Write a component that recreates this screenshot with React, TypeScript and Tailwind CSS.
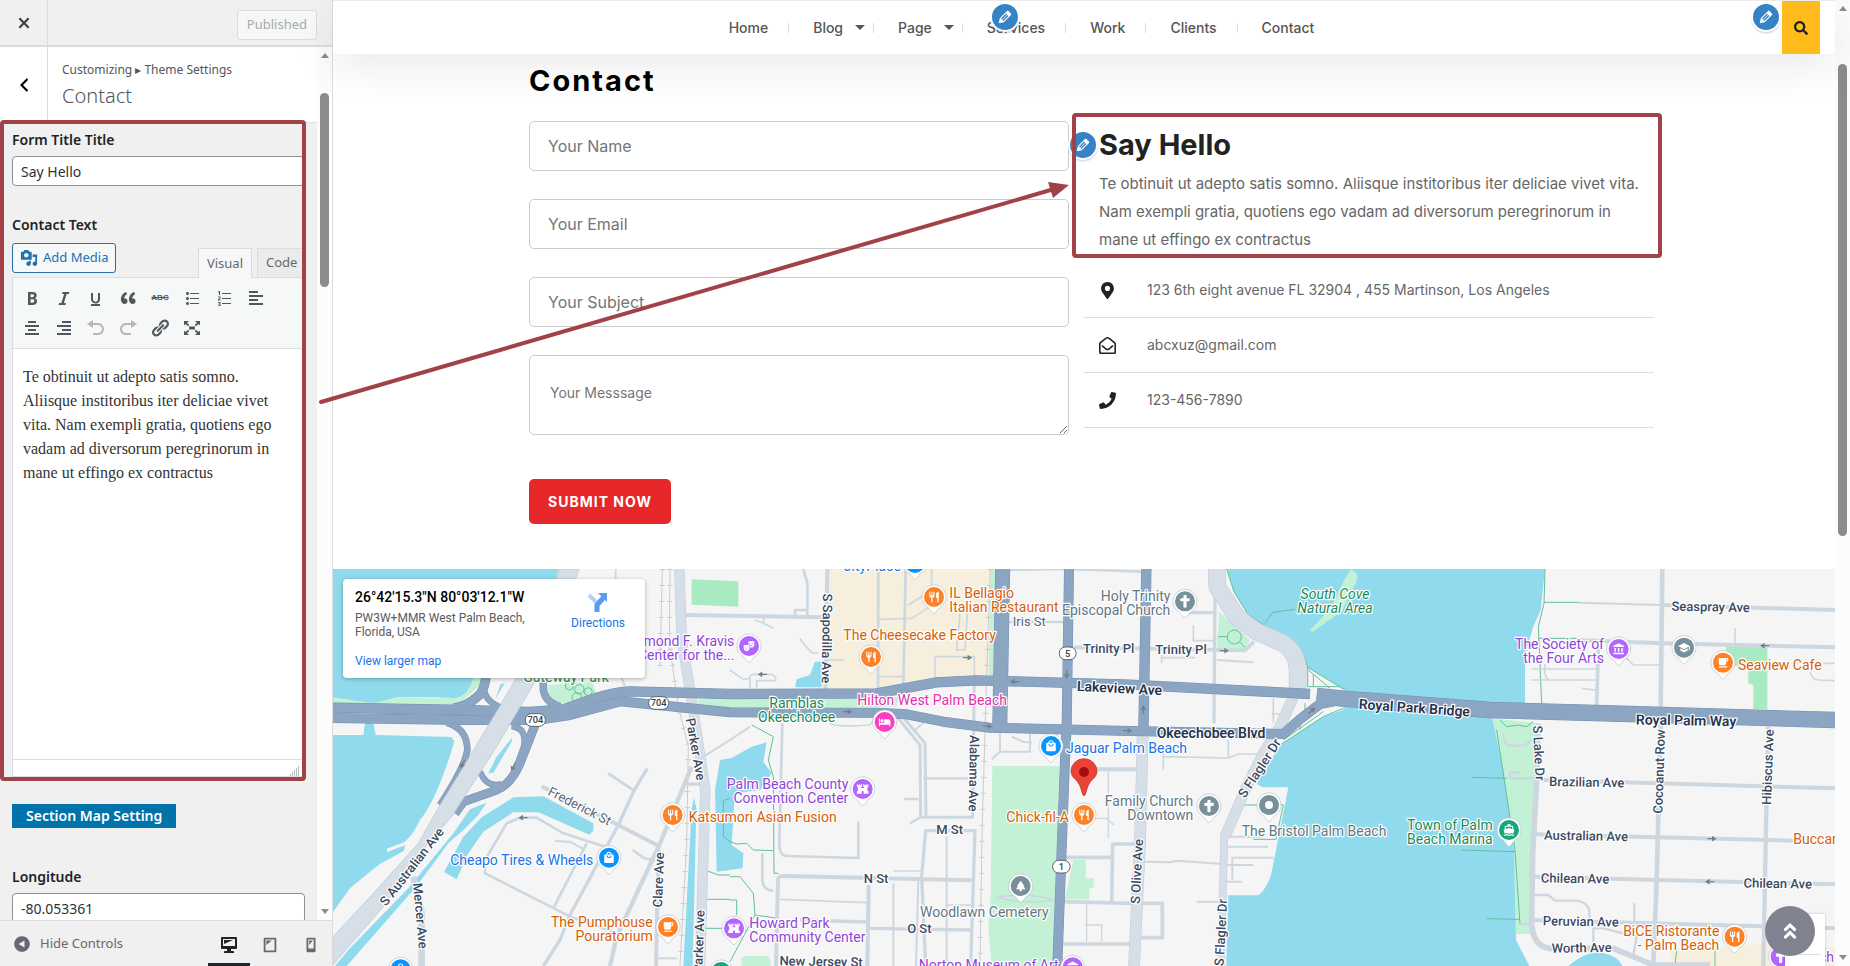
import type { ReactNode } from "react";
import {
  FaAngleDoubleUp,
  FaCross,
  FaMapMarkerAlt,
  FaPhone,
  FaRegEnvelopeOpen,
  FaSearch,
} from "react-icons/fa";
import {
  MdAccountBalance,
  MdDirectionsBoat,
  MdFort,
  MdHotel,
  MdLocalCafe,
  MdLocalMall,
  MdPark,
  MdRestaurant,
  MdSchool,
  MdTheaterComedy,
} from "react-icons/md";
import type { IconType } from "react-icons";

/* ---------- icons ---------- */

const glyphs = {
  close:
    "M14.95 6.46L11.41 10l3.54 3.54-1.41 1.41L10 11.42l-3.53 3.53-1.42-1.42L8.58 10 5.05 6.47l1.42-1.42L10 8.58l3.54-3.53z",
  back: "M14 5l-5 5 5 5-1 2-7-7 7-7z",
  media:
    "M13 11V4c0-.55-.45-1-1-1h-1.67L9 1H5L3.67 3H2c-.55 0-1 .45-1 1v7c0 .55.45 1 1 1h10c.55 0 1-.45 1-1zM7 4.5c1.38 0 2.5 1.12 2.5 2.5S8.38 9.5 7 9.5 4.5 8.38 4.5 7 5.62 4.5 7 4.5zM14 6h5v10.5c0 1.38-1.12 2.5-2.5 2.5S14 17.88 14 16.5s1.12-2.5 2.5-2.5c.17 0 .34.02.5.05V9h-3V6zm-4 8.05V13h2v3.5c0 1.38-1.12 2.5-2.5 2.5S7 17.88 7 16.5 8.12 14 9.5 14c.17 0 .34.02.5.05z",
  bold: "M6 4v13h4.54c1.37 0 2.46-.33 3.26-1 .8-.66 1.2-1.58 1.2-2.77 0-.84-.17-1.51-.51-2.01s-.9-.85-1.67-1.03v-.09c.57-.1 1.02-.4 1.36-.9s.51-1.13.51-1.91c0-1.14-.39-1.98-1.17-2.5C12.75 4.26 11.5 4 9.78 4H6zm2.57 5.15V6.26h1.36c.73 0 1.27.11 1.61.32.34.22.51.58.51 1.07 0 .54-.16.92-.47 1.15s-.82.35-1.51.35h-1.5zm0 2.19h1.6c1.44 0 2.16.53 2.16 1.61 0 .6-.17 1.05-.51 1.34s-.86.43-1.57.43H8.57v-3.38z",
  italic: "M14.78 6h-2.13l-2.8 9h2.12l-.62 2H4.6l.62-2h2.14l2.8-9H8.03l.62-2h6.75z",
  underline:
    "M14 5h-2v5.71c0 1.99-1.12 2.98-2.45 2.98-1.32 0-2.55-1-2.55-2.96V5H5v5.87c0 1.91 1 4.54 4.48 4.54 3.49 0 4.52-2.58 4.52-4.5V5zm0 13v-2H5v2h9z",
  quote:
    "M9.49 13.22c0-.74-.2-1.38-.61-1.9-.62-.78-1.83-.88-2.53-.72-.29-1.65 1.11-3.75 2.92-4.65L7.88 4c-2.73 1.3-5.42 4.28-4.96 8.05C3.21 14.43 4.59 16 6.54 16c.85 0 1.56-.25 2.12-.75s.83-1.18.83-2.03zm8.05 0c0-.74-.2-1.38-.61-1.9-.63-.78-1.83-.88-2.53-.72-.29-1.65 1.11-3.75 2.92-4.65L15.93 4c-2.73 1.3-5.41 4.28-4.95 8.05.29 2.38 1.66 3.95 3.61 3.95.85 0 1.56-.25 2.12-.75s.83-1.18.83-2.03z",
  bullets:
    "M5.5 7C4.67 7 4 6.33 4 5.5 4 4.68 4.67 4 5.5 4 6.32 4 7 4.68 7 5.5 7 6.33 6.32 7 5.5 7zM8 5h9v1H8V5zm-2.5 7c-.83 0-1.5-.67-1.5-1.5C4 9.68 4.67 9 5.5 9c.82 0 1.5.68 1.5 1.5 0 .83-.68 1.5-1.5 1.5zM8 10h9v1H8v-1zm-2.5 7c-.83 0-1.5-.67-1.5-1.5 0-.82.67-1.5 1.5-1.5.82 0 1.5.68 1.5 1.5 0 .83-.68 1.5-1.5 1.5zM8 15h9v1H8v-1z",
  numbers:
    "M8 5h9v1H8zM8 10h9v1H8zM8 15h9v1H8zM5 3h1v4H5V4.4l-.8.3V3.8zM4 8.5h2.5v2L5 11.6h1.5v.9H4v-1.2l1.6-1.2v-.8H4zM4 14h2.5v4H4v-.8h1.6v-.8H4.5v-.8h1.1v-.8H4z",
  left: "M12 5V3H3v2h9zm5 4V7H3v2h14zm-5 4v-2H3v2h9zm5 4v-2H3v2h14z",
  center: "M14 5V3H6v2h8zm3 4V7H3v2h14zm-3 4v-2H6v2h8zm3 4v-2H3v2h14z",
  right: "M17 5V3H8v2h9zm0 4V7H3v2h14zm0 4v-2H8v2h9zm0 4v-2H3v2h14z",
  undo: "M12 5H7V2L1 6l6 4V7h5c2.2 0 4 1.8 4 4s-1.8 4-4 4H7v2h5c3.3 0 6-2.7 6-6s-2.7-6-6-6z",
  redo: "M8 5h5V2l6 4-6 4V7H8c-2.2 0-4 1.8-4 4s1.8 4 4 4h5v2H8c-3.3 0-6-2.7-6-6s2.7-6 6-6z",
  link: "M17.74 2.76c1.68 1.69 1.68 4.41 0 6.1l-1.53 1.52c-1.12 1.12-2.7 1.47-4.14 1.09l2.62-2.61.76-.77.76-.76c.84-.84.84-2.2 0-3.04-.84-.85-2.2-.85-3.04 0l-.77.76-3.38 3.38c-.37-1.44-.02-3.02 1.1-4.14l1.52-1.53c1.69-1.68 4.42-1.68 6.1 0zM8.59 13.43l5.34-5.34c.42-.42.42-1.1 0-1.52-.44-.43-1.13-.39-1.53 0l-5.33 5.34c-.42.42-.42 1.1 0 1.52.44.43 1.13.39 1.52 0zm-.76 2.29l4.14-4.15c.38 1.44.03 3.02-1.09 4.14l-1.52 1.53c-1.69 1.68-4.41 1.68-6.1 0-1.68-1.68-1.68-4.42 0-6.1l1.53-1.52c1.12-1.12 2.7-1.47 4.14-1.1l-4.14 4.15c-.85.84-.85 2.2 0 3.05.84.84 2.2.84 3.04 0z",
  fullscreen:
    "M7 3H2v4.500l1.500-1.500L6 8.200 7.200 7 5 4.800zM13 3l2 1.800L12.800 7 14 8.200l2.500-2.200L18 7.500V3zM14 11.800L12.800 13l2.200 2.200-2 1.800h5v-4.500L16.500 14zM6 11.800L3.500 14 2 12.500V17h5l-2-1.800L7.200 13zM7 8.500h6v3H7z",
  edit: "M13.89 3.39l2.71 2.72c.46.46.42 1.24.03 1.64l-8.01 8.02-5.56 1.16 1.16-5.58s7.6-7.63 7.99-8.03c.39-.39 1.22-.39 1.68.07zm-2.73 2.79l-5.59 5.61 1.11 1.11 5.54-5.65zm-2.97 8.23l5.58-5.6-1.07-1.08-5.59 5.6z",
  desktop:
    "M3 2h14c.55 0 1 .45 1 1v10c0 .55-.45 1-1 1h-5v2h2c.55 0 1 .45 1 1v1H5v-1c0-.55.45-1 1-1h2v-2H3c-.55 0-1-.45-1-1V3c0-.55.45-1 1-1zm13 9V4H4v7h12zM5 5h9L5 9V5z",
  tablet:
    "M4 2h12c.55 0 1 .45 1 1v14c0 .55-.45 1-1 1H4c-.55 0-1-.45-1-1V3c0-.55.45-1 1-1zm11 14V4H5v12h10zM6 5h6l-6 5V5z",
  phone:
    "M6 2h8c.55 0 1 .45 1 1v14c0 .55-.45 1-1 1H6c-.55 0-1-.45-1-1V3c0-.55.45-1 1-1zm7 12V4H7v10h6zM8 5h4l-4 5V5z",
  collapse:
    "M10 2.200c4.300 0 7.800 3.500 7.800 7.800s-3.500 7.800-7.800 7.800S2.200 14.300 2.200 10 5.700 2.200 10 2.200zM12.500 13.500v-7L6.500 10z",
};

type GlyphName = keyof typeof glyphs;

function Glyph({ name, className = "size-5" }: { name: GlyphName; className?: string }) {
  return (
    <svg viewBox="0 0 20 20" className={className} fill="currentColor" fillRule="evenodd" aria-hidden="true">
      <path d={glyphs[name]} />
    </svg>
  );
}

function EditShortcut({ label, className }: { label: string; className: string }) {
  return (
    <button
      type="button"
      aria-label={label}
      className={`absolute flex size-[30px] items-center justify-center rounded-full border-2 border-white bg-[#3582c4] text-white shadow-[0_2px_1px_rgba(46,68,83,0.15)] ${className}`}
    >
      <Glyph name="edit" className="size-[18px]" />
    </button>
  );
}

/* ---------- customizer sidebar ---------- */

type Tool = GlyphName | "strike";

const toolRows: Tool[][] = [
  ["bold", "italic", "underline", "quote", "strike", "bullets", "numbers", "left"],
  ["center", "right", "undo", "redo", "link", "fullscreen"],
];

function Toolbar() {
  return (
    <div className="flex flex-col gap-[2px] border border-[#dcdcde] bg-[#f6f7f7] px-[5px] py-[6px] shadow-[0_1px_1px_rgba(0,0,0,0.1)]">
      {toolRows.map((row, i) => (
        <div key={i} className="flex gap-1">
          {row.map((tool) => (
            <button
              key={tool}
              type="button"
              aria-label={tool}
              className={`flex size-7 items-center justify-center ${
                tool === "undo" || tool === "redo" ? "text-[#b5b7ba]" : "text-[#50575e]"
              }`}
            >
              {tool === "strike" ? (
                <span className="font-['Liberation_Sans'] text-[8px] font-bold line-through">ABC</span>
              ) : (
                <Glyph name={tool} />
              )}
            </button>
          ))}
        </div>
      ))}
    </div>
  );
}

const editorText =
  "Te obtinuit ut adepto satis somno. Aliisque institoribus iter deliciae vivet vita. Nam exempli gratia, quotiens ego vadam ad diversorum peregrinorum in mane ut effingo ex contractus";

function Scrollbar({ className, children }: { className: string; children: ReactNode }) {
  return (
    <div className={`flex w-[15px] shrink-0 flex-col items-center justify-between bg-[#fcfcfc] ${className}`}>
      <span className="border-x-4 border-b-[5px] border-x-transparent border-b-[#8b8b8b]" />
      {children}
      <span className="border-x-4 border-t-[5px] border-x-transparent border-t-[#8b8b8b]" />
    </div>
  );
}

function Sidebar() {
  return (
    <aside className="flex w-[333px] shrink-0 flex-col border-r border-[#dcdcde] bg-[#f0f0f0] font-['Noto_Sans',sans-serif] text-[13px] text-[#3c434a]">
      <header className="flex h-[47px] shrink-0 border-b-2 border-[#dcdcde]">
        <button
          type="button"
          aria-label="Close"
          className="flex w-12 items-center justify-center border-r border-[#dcdcde] text-[#3c434a]"
        >
          <Glyph name="close" className="size-[22px]" />
        </button>
        <div className="flex flex-1 items-center justify-end pt-1 pr-[15px]">
          <button
            type="button"
            disabled
            className="h-[30px] rounded-[3px] border border-[#dcdcde] bg-[#f6f7f7] px-[9px] text-[#a7aaad]"
          >
            Published
          </button>
        </div>
      </header>

      <div className="flex min-h-0 flex-1">
        <div className="flex min-w-0 flex-1 flex-col overflow-hidden">
          <div className="flex h-[76px] shrink-0 border-b border-[#dcdcde] bg-white">
            <button
              type="button"
              aria-label="Back"
              className="flex w-12 items-center justify-center border-r border-[#dcdcde] text-black"
            >
              <Glyph name="back" />
            </button>
            <div className="flex flex-col justify-center gap-[2px] px-[14px] text-[#50575e]">
              <span className="text-xs leading-5">Customizing ▸ Theme Settings</span>
              <h2 className="text-xl leading-7 font-light">Contact</h2>
            </div>
          </div>

          <section className="relative flex h-[658px] shrink-0 flex-col px-3 pt-[5px]">
            <label htmlFor="form-title" className="text-sm leading-6 font-semibold text-[#1d2327]">
              Form Title Title
            </label>
            <input
              id="form-title"
              defaultValue="Say Hello"
              className="mt-1 h-[30px] w-full rounded border border-[#8c8f94] bg-white px-2 text-sm text-[#2c3338]"
            />
            <label htmlFor="contact-text" className="mt-[27px] text-sm leading-6 font-semibold text-[#1d2327]">
              Contact Text
            </label>
            <div className="mt-[6px] flex h-[34px] items-start">
              <button
                type="button"
                className="flex h-[30px] items-center gap-[5px] rounded-[3px] border border-[#2271b1] bg-[#f6f7f7] px-[7px] text-[#2271b1]"
              >
                <Glyph name="media" className="size-[18px]" />
                Add Media
              </button>
              <div className="ml-auto flex gap-[5px] self-end text-[#646970]">
                <button
                  type="button"
                  className="relative z-10 -mb-px h-[30px] border border-b-0 border-[#dcdcde] bg-[#f6f7f7] px-2"
                >
                  Visual
                </button>
                <button type="button" className="h-[29px] w-12 border border-b-0 border-[#dcdcde] bg-[#ebebeb] px-2 text-left">
                  Code
                </button>
              </div>
            </div>
            <Toolbar />
            <textarea
              id="contact-text"
              defaultValue={editorText}
              className="block w-full flex-1 resize-none border-x border-[#dcdcde] bg-white px-[10px] py-4 font-['Liberation_Serif',serif] text-base leading-6 text-[#333]"
            />
            <div className="mb-1 flex h-[18px] items-end justify-end border border-[#dcdcde] bg-white pr-1">
              <svg viewBox="0 0 12 12" className="size-3 text-[#787c82]" aria-hidden="true">
                <path d="M2 11h10M4 9h8M6 7h6M8 5h4M10 3h2" stroke="currentColor" strokeDasharray="1 1" />
              </svg>
            </div>
            <div className="pointer-events-none absolute inset-y-0 -top-[3px] left-0 w-[306px] rounded-sm border-4 border-[#a04248]" />
          </section>

          <div className="flex flex-col items-start px-3 pt-[23px]">
            <h3 className="bg-[#0073aa] px-[14px] text-sm leading-6 font-semibold text-white">Section Map Setting</h3>
            <label htmlFor="longitude" className="mt-[37px] text-sm leading-6 font-semibold text-[#1d2327]">
              Longitude
            </label>
            <input
              id="longitude"
              defaultValue="-80.053361"
              className="mt-1 h-[30px] w-full rounded border border-[#8c8f94] bg-white px-2 text-sm text-[#2c3338]"
            />
          </div>
        </div>
        <Scrollbar className="py-[6px]">
          <span className="mt-[35px] mb-auto h-[194px] w-[9px] rounded-full bg-[#8b8b8b]" />
        </Scrollbar>
      </div>

      <footer className="flex h-[46px] shrink-0 items-stretch border-t border-[#dcdcde] pl-3">
        <button type="button" className="flex items-center gap-2 text-[#646970]">
          <Glyph name="collapse" />
          Hide Controls
        </button>
        <div className="ml-auto flex text-[#646970]">
          <button type="button" aria-label="Desktop preview" className="w-[42px] border-b-[3px] border-[#1d2327] pt-[5px] text-[#1d2327]">
            <Glyph name="desktop" className="mx-auto size-5" />
          </button>
          <button type="button" aria-label="Tablet preview" className="w-10 pt-[3px]">
            <Glyph name="tablet" className="mx-auto size-[18px]" />
          </button>
          <button type="button" aria-label="Mobile preview" className="w-[42px] pt-[3px]">
            <Glyph name="phone" className="mx-auto size-[18px]" />
          </button>
        </div>
      </footer>
    </aside>
  );
}

/* ---------- site preview ---------- */

const navItems = [
  { name: "Home" },
  { name: "Blog", menu: true },
  { name: "Page", menu: true },
  { name: "Services" },
  { name: "Work" },
  { name: "Clients" },
  { name: "Contact" },
];

function SiteNav() {
  return (
    <header className="relative z-10 flex h-[54px] shrink-0 border-t border-[#ebebeb] bg-white shadow-[0_15px_40px_rgba(0,0,0,0.08)]">
      <nav className="flex flex-1 items-center justify-center pr-[52px]">
        {navItems.map((item, i) => (
          <div key={item.name} className="flex items-center">
            {i > 0 && <span className="mr-6 h-[10px] w-px bg-[#ddd]" />}
            <a
              href="#"
              className={`flex items-center gap-3 text-sm font-medium text-[#555] ${item.menu ? "mr-2" : "mr-5"}`}
            >
              {item.name}
              {item.menu && <span className="border-x-[5px] border-t-[5px] border-x-transparent border-t-[#555]" />}
            </a>
          </div>
        ))}
      </nav>
      <button type="button" aria-label="Search" className="mr-[15px] flex w-[38px] items-center justify-center bg-[#ffba1b] text-[#222]">
        <FaSearch className="size-[14px]" />
      </button>
      <EditShortcut label="Edit menu" className="top-px left-[657px]" />
      <EditShortcut label="Edit search" className="top-px right-[54px]" />
    </header>
  );
}

const fields = ["Your Name", "Your Email", "Your Subject"];

const details = [
  { icon: FaMapMarkerAlt, text: "123 6th eight avenue FL 32904 , 455 Martinson, Los Angeles" },
  { icon: FaRegEnvelopeOpen, text: "abcxuz@gmail.com" },
  { icon: FaPhone, text: "123-456-7890" },
];

function ContactSection() {
  return (
    <section className="mx-auto grid h-[515px] w-full max-w-[1140px] shrink-0 grid-cols-2">
      <form className="flex flex-col items-start px-[15px] pt-2">
        <h1 className="text-[29px] leading-[38px] font-bold tracking-[2px] text-black">Contact</h1>
        <div className="mt-[21px] flex w-full flex-col gap-7">
          {fields.map((field) => (
            <input
              key={field}
              aria-label={field}
              placeholder={field}
              className="h-[50px] w-full rounded-[5px] border border-[#ccc] px-[18px] text-base placeholder:text-[#757575]"
            />
          ))}
          <textarea
            aria-label="Your Messsage"
            placeholder="Your Messsage"
            className="h-20 w-full rounded-[5px] border border-[#ccc] px-5 py-[27px] text-sm placeholder:text-[#757575]"
          />
        </div>
        <button
          type="submit"
          className="mt-11 h-[45px] rounded-[5px] bg-[#e72729] px-[19px] text-sm font-bold tracking-[1px] text-white"
        >
          SUBMIT NOW
        </button>
      </form>

      <div className="pt-[71px]">
        <div className="relative px-[15px] pb-[9px] text-[#666]">
          <h2 className="text-[29px] leading-10 font-bold text-[#222]">Say Hello</h2>
          <p className="mt-[5px] w-[540px] text-[15px] leading-7">
            Te obtinuit ut adepto satis somno. Aliisque institoribus iter deliciae vivet vita. Nam exempli gratia,
            quotiens ego vadam ad diversorum peregrinorum in mane ut effingo ex contractus
          </p>
          <EditShortcut label="Edit contact text" className="top-[5px] -left-4" />
          <div className="pointer-events-none absolute -top-3 -right-2 bottom-[5px] -left-3 rounded-sm border-4 border-[#a04248]" />
        </div>
        <ul>
          {details.map(({ icon: Icon, text }) => (
            <li key={text} className="flex h-[55px] items-center border-b border-[#ddd] px-[15px] text-sm text-[#666]">
              <span className="w-12 text-[#222]">
                <Icon className="size-[17px]" />
              </span>
              {text}
            </li>
          ))}
        </ul>
      </div>
    </section>
  );
}

/* ---------- map ---------- */

const water = [
  "M9 27H685L640 200 430 353Q410 425 350 412L250 412 200 412 130 430 9 412Z",
  "M9 525L100 525 105 488H130L137 525 365 531 373 545Q320 720 270 780 240 840 215 850L170 866 172 876 226 855 222 872 150 912 120 935 60 985 9 1056Z",
  "M470 728L420 748 370 820 300 905 235 985 60 1165 15 1218H50L250 990 300 925 355 850 400 810 445 765Z",
  "M342 936L400 830 455 772 550 712 640 709 790 790V812L778 824 625 757 550 757 460 815 415 880 380 958Z",
  "M475 640L500 590 546 533 545 545 490 638Z",
  "M496 418L512 372 524 370Z",
  "M1085 745L1092 712 1099 745 1088 1218H1060Z",
  "M1155 690L1170 600 1205 594 1265 560 1310 547 1300 605 1325 640 1290 690 1215 700 1205 855 1240 880 1238 925 1160 935Z",
  "M1395 382L1400 358 1440 345 1455 305 1475 305 1475 382Z",
  "M2690 27L2712 95 2752 160 2810 202 2885 243 2922 290 2933 322 3045 390 3040 450 2980 470 2855 552 2795 640 2780 672 2797 682H2875L2838 870 2822 950Q2800 1000 2783 1006H2695L2689 1218H3598L3558 1140 3552 870 3522 640 3487 475 3585 475V290L3608 205 3632 150 3645 27Z",
  "M3715 1218Q3760 1178 3800 1178 3860 1180 3877 1218Z",
];

const parks = [
  "M640 27H705L640 200 460 360Q430 400 380 434H9V400L120 428 160 412 320 415Q390 400 410 353Z",
  "M655 375L785 365 800 400 690 432 655 438Z",
  "M1105 418L1705 412 1700 440 1200 445 1105 440Z",
  "M1982 27H1996L1990 350H1976Z",
  "M1987 618H2188L2170 1218H1985L1975 1100 1982 1010Z",
  "M2230 900H2267V955H2292L2290 985H2278V1018H2205Z",
  "M2668 155L2760 240 2745 268H2660Z",
  "M3487 475L3625 490 3605 800 3600 1122H3557L3552 870 3522 640Z",
  "M1235 1218V1197Q1237 1187 1250 1187H1310Q1322 1190 1322 1218Z",
];

const cove = "M3062 28Q3090 40 3080 62L3035 155 2990 185 2947 217 2940 210 2965 185 3010 130 3040 65Z";

const lawns = ["M1085 58L1225 64V140L1085 134Z", "M4188 260H4312V448H4270V375L4255 370V318H4188Z"];

const districts = [
  "M1485 27H1982L1976 345 1840 362 1650 388H1478Z",
  "M4020 1172L4160 1162 4315 1150 4515 1162V1218H4020Z",
];

// [path, stroke width]
const streets: [string, number][] = [
  ["M835 640L912 692", 8],
  ["M952 625L912 692 865 795 720 1065 690 1140 640 1218", 10],
  ["M635 680L700 710 985 857 985 900 978 1218", 12],
  ["M1085 620L990 850 860 1130 840 1218", 13],
  ["M570 773L530 790 465 900V940L720 1070 850 1115", 8],
  ["M570 773H620L700 820 830 862", 8],
  ["M675 843L720 845 765 870", 6],
  ["M770 850L670 1045", 8],
  ["M908 870L940 893 975 903", 8],
  ["M1120 590L1200 540 1260 500", 6],
  ["M250 950L275 1060V1218", 20],
  ["M1060 165L1480 172", 12],
  ["M857 27V60", 5],
  ["M1070 672H1120", 10],
  ["M875 353L885 380", 6],
  ["M985 1195H1040", 6],
  ["M1492 27L1486 410", 12],
  ["M1420 27L1432 70V165M1395 165V150H1432", 8],
  ["M1645 27L1644 385M1727 27L1720 385", 8],
  ["M1805 27V90L1735 135M1645 178L1745 175 1800 140M1815 360V290H1933V350M1890 160L1880 270H1905L1912 160M1645 350H1720", 5],
  ["M1260 385V350Q1262 343 1270 343H1325Q1342 350 1335 362H1280V385M1200 330L1240 358 1262 355M1410 235L1420 250 1445 278 1465 280M1275 180L1300 190 1330 205M1300 190L1302 172M1485 300H1540", 5],
  ["M1933 350L1928 772H1770", 9],
  ["M1705 475L1770 555 1772 770M1722 475L1785 550 1788 770", 9],
  ["M1500 490Q1510 502 1620 495L1645 460M1755 510L1790 480", 5],
  ["M1357 490L1348 850Q1348 888 1370 888L1585 894V785", 8],
  ["M1780 655H1915M1722 717H1765M1740 790L1775 770", 7],
  ["M1787 1218L1775 950 1787 812H1935L1922 1218", 10],
  ["M1765 960L1758 1218M1850 830V1218M1690 970V1218", 6],
  ["M1338 1218L1344 960Q1345 948 1360 948L1925 961", 12],
  ["M1690 933H1775M1348 1018L1615 1028M1850 1035H1925", 5],
  ["M1410 1080L1615 1086M1620 1105L1925 1110", 10],
  ["M1616 975L1612 1218", 12],
  ["M1297 880V960Q1300 992 1330 992", 8],
  ["M2035 186H2205M2010 30L2217 27M2217 27L2435 35", 8],
  ["M2230 262L2745 271 2772 245", 11],
  ["M2010 520V575H2100V520M1985 598L2010 575M2045 530L2080 545 2105 548", 6],
  ["M2225 628H2425", 12],
  ["M2205 892H2345M2345 1025L2348 852H2425M2200 1025L2410 1030M2200 1152H2410", 11],
  ["M2270 1030V1145M2265 1095H2315V1145M2335 630V835M2290 775H2330L2352 795", 4],
  ["M2000 1012Q2090 995 2172 1020 2090 1035 2000 1012Z", 5],
  ["M2655 90L2652 490M2560 158H2660", 10],
  ["M2590 195V242H2655M2495 285V310M2497 293H2595M2830 415V490M2825 462H2860M2500 580V630M2500 590L2695 594 2725 582H2800M2695 540V592", 5],
  ["M2660 300L2770 307M2675 830H2800M2690 860H2815M2707 960V893H2830M2670 915H2770M2690 965H2735M2440 905L2520 907 2545 902 2680 912M2600 1025H2670", 6],
  ["M2430 1030H2497V1133H2430", 11],
  ["M3997 27L3992 440M3992 490L3980 960 3970 1218", 14],
  ["M3745 128L3995 135", 6],
  ["M3995 135L4515 150M3740 240L3995 250 4515 262M3640 660L4515 685M3610 823L4390 842M3605 950L4515 973M3600 1080L4515 1105", 12],
  ["M4215 205V250M3865 270L3910 315H3990M3605 327H3800M3602 360H3795M3755 385L3795 390M3645 312Q3640 350 3655 358M4480 310H4515M4440 335Q4445 358 4465 360L4515 362", 5],
  ["M3805 265L3800 435", 11],
  ["M3625 490L3620 660 3608 880 3605 1080Q3605 1160 3660 1165L3850 1165 3910 1190 3970 1215H4140", 17],
  ["M4315 500L4308 800 4300 1218", 13],
  ["M3610 1005H3655L3675 1022H3740Q3778 1030 3778 1055V1085M3790 1160V1105H3820L3920 1130 3910 1185M3913 1030V1085M3520 520Q3522 557 3540 557H3585L3605 540M3570 638H3540V655H3615M3570 1092H3605", 7],
];

const avenues: [string, number][] = [
  ["M1048 27L1055 240 1085 420 1126 690 1110 1218", 28],
  ["M2660 27L2662 80 2720 170 2780 215 2860 250Q2903 280 2903 330V400", 50],
  ["M2895 400L2850 500 2800 580 2750 680 2685 830", 30],
  ["M2683 820L2678 1020 2674 1218", 20],
  ["M2438 530L2430 850 2412 1218", 32],
];

const highways: [string, number][] = [
  ["M350 488Q412 505 412 570 405 620 330 735", 17],
  ["M468 353Q460 400 440 412 410 440 370 445", 26],
  ["M460 370Q458 425 520 445", 16],
  ["M640 365V385Q642 425 690 440", 20],
  ["M545 498Q592 505 582 560 L560 620", 16],
  ["M615 495L570 610Q545 670 500 690L400 725 375 760", 24],
  ["M450 635Q470 685 515 672", 15],
  ["M9 443L400 450 600 456 700 448 780 420Q850 395 900 394L1200 402 1640 400 1820 367 1940 361 2400 374 2940 402", 28],
  ["M9 474L400 480 620 480 720 465 870 424 1200 457 1640 458 1730 463 1840 485 1980 503 2400 513 2860 522 2910 478 2970 432 3040 418", 27],
  ["M2018 27L2009 515", 42],
  ["M2217 27L2210 500 2205 600 2190 1000 2182 1218", 27],
  ["M2449 27L2440 520", 28],
  ["M2960 408L3040 416 3480 450 3900 462 4515 480", 46],
];

const trails =
  "M3645 27L3642 130 3625 200 3635 430M3642 127H3750M3625 235H3740M3500 510L3555 870 3570 1092M3425 652L3530 655M3395 870L3555 875M3470 1076L3570 1078M3510 480L3530 500 3565 495 3590 500 3610 485M2805 190L2828 157 2895 148M2735 735H2785M2840 730L2860 735 2838 838H2770M1265 495L1330 530 1315 600 1330 650 1332 940H1345M1200 845L1220 852 1250 850 1270 870 1330 872M1200 950H1230L1270 1000 1275 1065 1200 1205M1200 1020H1220V1065M1275 1065L1345 1075M1125 930L1165 945H1200M1120 1018H1200M1120 1105H1185M1200 715L1180 722V830L1200 845M2690 27L2712 95 2752 160 2810 202 2885 243 2922 290 2933 322 3045 390M2933 320V380H3030M2950 345V380M2935 330L3000 385M2925 430V450M2855 552L2980 470 3040 445M2910 490V510M2860 540L2980 455M2663 230H2690M2728 245L2745 262M4035 1218L4040 1170M4155 1170V1218";

const rails =
  "M997 27L990 320M1020 27L1018 250 1045 440 1075 560 1070 850 1050 1218M1981 27L1970 350 1956 820 1950 1218";

type LabelProps = {
  x: number;
  y: number;
  lines: string[];
  color: string;
  anchor?: "start" | "middle" | "end";
  rotate?: number;
  size?: number;
  weight?: number;
  italic?: boolean;
};

const ink = "#3b4a63";
const food = "#d5600a";
const shop = "#1a73e8";
const arts = "#8f45d8";
const civic = "#5f7885";
const nature = "#188a5b";

const placeLabels: LabelProps[] = [
  { x: 1213, y: 258, lines: ["Raymond F. Kravis", "Center for the..."], color: arts, anchor: "end" },
  { x: 708, y: 367, lines: ["Gateway Park"], color: nature, anchor: "middle" },
  { x: 1400, y: 445, lines: ["Ramblas", "Okeechobee"], color: nature, anchor: "middle" },
  { x: 3015, y: 118, lines: ["South Cove", "Natural Area"], color: nature, anchor: "middle", italic: true },
  { x: 3488, y: 811, lines: ["Town of Palm", "Beach Marina"], color: nature, anchor: "end" },
  { x: 1076, y: 787, lines: ["Katsumori Asian Fusion"], color: food },
  { x: 968, y: 1102, lines: ["The Pumphouse", "Pouratorium"], color: food, anchor: "end" },
  { x: 1858, y: 113, lines: ["IL Bellagio", "Italian Restaurant"], color: food },
  { x: 1540, y: 241, lines: ["The Cheesecake Factory"], color: food },
  { x: 2217, y: 787, lines: ["Chick-fil-A"], color: food, anchor: "end" },
  { x: 4224, y: 331, lines: ["Seaview Cafe"], color: food },
  { x: 4390, y: 853, lines: ["Buccan"], color: food },
  { x: 4168, y: 1129, lines: ["BiCE Ristorante", "- Palm Beach"], color: food, anchor: "end" },
  { x: 790, y: 915, lines: ["Cheapo Tires & Wheels"], color: shop, anchor: "end" },
  { x: 2208, y: 580, lines: ["Jaguar Palm Beach"], color: shop },
  { x: 1625, y: 33, lines: ["CityPlace"], color: shop, anchor: "middle" },
  { x: 1555, y: 688, lines: ["Palm Beach County", "Convention Center"], color: arts, anchor: "end" },
  { x: 1258, y: 1104, lines: ["Howard Park", "Community Center"], color: arts },
  { x: 3822, y: 268, lines: ["The Society of", "the Four Arts"], color: arts, anchor: "end" },
  { x: 2186, y: 1230, lines: ["Norton Museum of Art"], color: arts, anchor: "end" },
  { x: 4512, y: 1205, lines: ["Church"], color: arts, anchor: "end" },
  { x: 2521, y: 124, lines: ["Holy Trinity", "Episcopal Church"], color: civic, anchor: "end" },
  { x: 2590, y: 739, lines: ["Family Church", "Downtown"], color: civic, anchor: "end" },
  { x: 2735, y: 829, lines: ["The Bristol Palm Beach"], color: civic },
  { x: 1770, y: 1071, lines: ["Woodlawn Cemetery"], color: civic },
  { x: 1582, y: 435, lines: ["Hilton West Palm Beach"], color: "#e52cb0" },
];

const streetLabels: LabelProps[] = [
  { x: 743, y: 750, lines: ["Frederick St"], color: "#56657a", rotate: 27, weight: 400 },
  { x: 1084, y: 570, lines: ["Parker Ave"], color: ink, rotate: 80 },
  { x: 1477, y: 235, lines: ["S Sapodilla Ave"], color: ink, rotate: 91 },
  { x: 1918, y: 640, lines: ["Alabama Ave"], color: ink, rotate: 91 },
  { x: 256, y: 928, lines: ["S Australian Ave"], color: ink, rotate: -52 },
  { x: 258, y: 1068, lines: ["Mercer Ave"], color: ink, rotate: 85 },
  { x: 999, y: 960, lines: ["Clare Ave"], color: ink, rotate: -88 },
  { x: 1120, y: 1145, lines: ["Parker Ave"], color: ink, rotate: -88 },
  { x: 2098, y: 197, lines: ["Iris St"], color: "#56657a", weight: 400 },
  { x: 2336, y: 279, lines: ["Trinity Pl"], color: ink },
  { x: 2553, y: 283, lines: ["Trinity Pl"], color: ink },
  { x: 1859, y: 822, lines: ["M St"], color: ink },
  { x: 1638, y: 969, lines: ["N St"], color: ink },
  { x: 1768, y: 1120, lines: ["O St"], color: ink },
  { x: 1473, y: 1218, lines: ["New Jersey St"], color: ink, rotate: 1 },
  { x: 2800, y: 632, lines: ["S Flagler Dr"], color: ink, rotate: -57 },
  { x: 2686, y: 1118, lines: ["S Flagler Dr"], color: ink, rotate: -87 },
  { x: 2434, y: 935, lines: ["S Olive Ave"], color: ink, rotate: -87 },
  { x: 4142, y: 154, lines: ["Seaspray Ave"], color: ink, rotate: 1 },
  { x: 3613, y: 580, lines: ["S Lake Dr"], color: ink, rotate: 87 },
  { x: 4001, y: 635, lines: ["Cocoanut Row"], color: ink, rotate: -88 },
  { x: 4327, y: 622, lines: ["Hibiscus Ave"], color: ink, rotate: -88 },
  { x: 3770, y: 680, lines: ["Brazilian Ave"], color: ink, rotate: 1 },
  { x: 3768, y: 841, lines: ["Australian Ave"], color: ink, rotate: 1 },
  { x: 3735, y: 969, lines: ["Chilean Ave"], color: ink, rotate: 1 },
  { x: 4343, y: 984, lines: ["Chilean Ave"], color: ink, rotate: 1 },
  { x: 3752, y: 1098, lines: ["Peruvian Ave"], color: ink, rotate: 1 },
  { x: 3755, y: 1177, lines: ["Worth Ave"], color: ink, rotate: -1 },
  { x: 2368, y: 399, lines: ["Lakeview Ave"], color: "#25344f", rotate: 3, size: 42, weight: 600 },
  { x: 2643, y: 534, lines: ["Okeechobee Blvd"], color: "#25344f", size: 42, weight: 600 },
  { x: 3252, y: 458, lines: ["Royal Park Bridge"], color: "#25344f", rotate: 4, size: 42, weight: 600 },
  { x: 4068, y: 496, lines: ["Royal Palm Way"], color: "#25344f", rotate: 1, size: 42, weight: 600 },
];

function MapLabel({ x, y, lines, color, anchor = "start", rotate = 0, size = 42, weight = 400, italic }: LabelProps) {
  return (
    <text
      transform={`translate(${x} ${y}) rotate(${rotate})`}
      fill={color}
      stroke="#ffffff"
      strokeWidth={7}
      strokeLinejoin="round"
      paintOrder="stroke"
      textAnchor={anchor}
      fontSize={size}
      fontWeight={weight}
      fontStyle={italic ? "italic" : "normal"}
    >
      {lines.map((line, i) => (
        <tspan key={line} x={0} y={i * 42}>
          {line}
        </tspan>
      ))}
    </text>
  );
}

const pins: { x: number; y: number; color: string; icon?: IconType }[] = [
  { x: 1028, y: 765, color: "#ff8126", icon: MdRestaurant },
  { x: 1812, y: 111, color: "#ff8126", icon: MdRestaurant },
  { x: 1623, y: 291, color: "#ff8126", icon: MdRestaurant },
  { x: 2262, y: 765, color: "#ff8126", icon: MdRestaurant },
  { x: 4214, y: 1130, color: "#ff8126", icon: MdRestaurant },
  { x: 1014, y: 1101, color: "#ff8126", icon: MdLocalCafe },
  { x: 4179, y: 308, color: "#ff8126", icon: MdLocalCafe },
  { x: 837, y: 893, color: "#0a94ff", icon: MdLocalMall },
  { x: 2163, y: 558, color: "#0a94ff", icon: MdLocalMall },
  { x: 1755, y: 9, color: "#0a94ff", icon: MdLocalMall },
  { x: 212, y: 1228, color: "#0a94ff", icon: MdLocalMall },
  { x: 1257, y: 258, color: "#b266ff", icon: MdTheaterComedy },
  { x: 1598, y: 687, color: "#b266ff", icon: MdFort },
  { x: 1212, y: 1105, color: "#b266ff", icon: MdFort },
  { x: 3866, y: 267, color: "#b266ff", icon: MdAccountBalance },
  { x: 2228, y: 1222, color: "#b266ff", icon: MdAccountBalance },
  { x: 4352, y: 1190, color: "#b266ff", icon: FaCross },
  { x: 1664, y: 486, color: "#ff3dc0", icon: MdHotel },
  { x: 2072, y: 978, color: "#78909c", icon: MdPark },
  { x: 2565, y: 124, color: "#78909c", icon: FaCross },
  { x: 2637, y: 738, color: "#78909c", icon: FaCross },
  { x: 2817, y: 735, color: "#78909c" },
  { x: 4062, y: 263, color: "#78909c", icon: MdSchool },
  { x: 3537, y: 810, color: "#17a67a", icon: MdDirectionsBoat },
  { x: 1173, y: 1236, color: "#17a67a", icon: MdPark },
];

function MapPin({ x, y, color, icon: Icon }: (typeof pins)[number]) {
  return (
    <g transform={`translate(${x} ${y})`}>
      <path
        d="M0 49C-6 49-9 38-18 31A36 36 0 1 1 18 31C9 38 6 49 0 49Z"
        fill="#fff"
        stroke="#b9bec4"
        strokeWidth={2}
      />
      <circle r={30} fill={color} />
      {Icon ? <Icon x={-19} y={-19} size={38} color="#fff" /> : <circle r={12} fill="#fff" />}
    </g>
  );
}

const shields = [
  { x: 616, y: 480, text: "704", w: 60 },
  { x: 986, y: 429, text: "704", w: 60 },
  { x: 2213, y: 280, text: "5", w: 50 },
  { x: 2194, y: 920, text: "1", w: 52 },
];

// one-way markers: [x, y, rotation]
const oneWay: [number, number, number][] = [
  [1298, 343, 180],
  [1912, 293, 0],
  [1552, 455, 0],
  [1972, 499, 5],
  [2055, 365, 180],
  [2210, 342, 90],
  [2440, 450, -90],
  [2945, 452, -40],
  [2682, 272, 0],
  [580, 773, 180],
  [398, 612, 120],
  [550, 620, 115],
  [2392, 512, 0],
  [4145, 836, 0],
  [4140, 965, 180],
  [4305, 257, 180],
];

function MapDrawing() {
  return (
    <svg
      viewBox="9 27 4506 1191"
      preserveAspectRatio="xMinYMin slice"
      className="size-full"
      fontFamily="Roboto, sans-serif"
      role="img"
      aria-label="Map of West Palm Beach"
    >
      <rect x="9" y="27" width="4506" height="1191" fill="#f5f5f5" />
      <g fill="#f7efdd">{districts.map((d) => <path key={d} d={d} />)}</g>
      <g fill="#c3f1d5">{parks.map((d) => <path key={d} d={d} />)}</g>
      <g fill="#a8eac2">{lawns.map((d) => <path key={d} d={d} />)}</g>
      <g fill="#90daee">{water.map((d) => <path key={d} d={d} />)}</g>
      <path d={cove} fill="#c3f1d5" />

      <g fill="none" stroke="#62bf99" strokeWidth={3}>
        <path d={trails} />
        <circle cx="2713" cy="231" r="21" />
        <circle cx="748" cy="388" r="14" />
        <circle cx="718" cy="378" r="12" />
        <circle cx="775" cy="395" r="12" />
        <circle cx="740" cy="412" r="14" />
      </g>
      <g fill="none" stroke="#cbcccd">
        <path d={rails} strokeWidth={3} />
        <path d={rails} strokeWidth={16} strokeDasharray="3 45" />
      </g>

      <g fill="none" stroke="#cdd7e0" strokeLinejoin="round">
        {streets.map(([d, width]) => <path key={d} d={d} strokeWidth={width} />)}
      </g>
      <g fill="none" strokeLinejoin="round">
        {avenues.map(([d, width]) => <path key={d} d={d} stroke="#bfcbd8" strokeWidth={width + 3} />)}
        {avenues.map(([d, width]) => <path key={d} d={d} stroke="#d6dfe7" strokeWidth={width} />)}
        {highways.map(([d, width]) => <path key={d} d={d} stroke="#7391b4" strokeWidth={width + 3} />)}
        {highways.map(([d, width]) => <path key={d} d={d} stroke="#8ba5c2" strokeWidth={width} />)}
      </g>
      <path
        d="M690 27H748L612 370 500 560 365 770 270 880 160 1040 9 1214V1130L130 1000 265 850 330 735 440 555 560 353Z"
        fill="#d6dfe7"
        stroke="#b6c4d3"
        strokeWidth={2}
      />

      <g fill="none" stroke="#75808c" strokeWidth={4}>
        {oneWay.map(([x, y, turn]) => (
          <path key={`${x}-${y}`} d="M-13 0H8M3-5L11 0 3 5Z" transform={`translate(${x} ${y}) rotate(${turn})`} />
        ))}
      </g>

      {streetLabels.map((label) => (
        <MapLabel key={`${label.lines[0]}-${label.x}`} size={39} weight={500} {...label} anchor="middle" />
      ))}
      {placeLabels.map((label) => (
        <MapLabel key={label.lines[0]} {...label} />
      ))}

      {shields.map(({ x, y, text, w }) => (
        <g key={`${text}-${x}`}>
          <rect x={x - w / 2} y={y - 19} width={w} height={38} rx={18} fill="#fff" stroke="#5b6470" strokeWidth={3} />
          <text x={x} y={y + 10} textAnchor="middle" fontSize={28} fontWeight={500} fill="#3c4043">
            {text}
          </text>
        </g>
      ))}
      {pins.map((pin) => (
        <MapPin key={`${pin.x}-${pin.y}`} {...pin} />
      ))}

      <path
        d="M2262 707C2256 707 2256 690 2248 674 2240 658 2223 652 2223 634A39 38 0 0 1 2301 634C2301 652 2284 658 2276 674 2268 690 2268 707 2262 707Z"
        fill="#ea4335"
        stroke="#c5221f"
        strokeWidth={2}
      />
      <circle cx="2262" cy="636" r="15" fill="#a50e0e" />
    </svg>
  );
}

function MapSection() {
  return (
    <section className="relative min-h-0 flex-1 overflow-hidden font-['Roboto',sans-serif]">
      <MapDrawing />
      <div className="absolute top-[10px] left-[10px] flex h-[99px] w-[302px] justify-between rounded-sm bg-white pt-[9px] pr-5 pl-3 text-xs shadow-[0_1px_4px_rgba(0,0,0,0.3)]">
        <div className="flex flex-col items-start">
          <h3 className="text-sm leading-[18px] font-medium text-black">26°42'15.3"N 80°03'12.1"W</h3>
          <p className="mt-[5px] w-[180px] leading-[14px] text-[#5b5b5b]">PW3W+MMR West Palm Beach, Florida, USA</p>
          <a href="#" className="mt-[14px] leading-4 text-[#1a73e8]">
            View larger map
          </a>
        </div>
        <a href="#" className="flex flex-col items-center pt-[3px] text-[#1a73e8]">
          <svg viewBox="0 0 22 22" className="size-[22px]" aria-hidden="true">
            <path d="M2 4L9 11" stroke="#b3d0f9" strokeWidth="4" fill="none" />
            <path d="M10 21V14L17 6" stroke="#5a9bec" strokeWidth="5" fill="none" />
            <path d="M11 2H20V11Z" fill="#5a9bec" />
          </svg>
          <span className="mt-[2px] leading-4">Directions</span>
        </a>
      </div>
      <div className="absolute right-[10px] bottom-0 h-[52px] w-10 bg-white pt-10 shadow-[0_0_3px_rgba(0,0,0,0.2)]">
        <hr className="mr-[5px] border-[#ddd]" />
      </div>
      <button
        type="button"
        aria-label="Scroll to top"
        className="absolute right-5 bottom-[10px] flex size-[50px] items-center justify-center rounded-full bg-[#80838f] text-white"
      >
        <FaAngleDoubleUp className="size-5" />
      </button>
    </section>
  );
}

export default function App() {
  return (
    <div className="relative flex h-screen overflow-hidden bg-white">
      <Sidebar />
      <div className="flex min-w-0 flex-1">
        <main className="flex min-w-0 flex-1 flex-col font-['Inter',sans-serif]">
          <SiteNav />
          <ContactSection />
          <MapSection />
        </main>
        <Scrollbar className="py-[6px]">
          <span className="mt-[53px] mb-auto h-[472px] w-[9px] rounded-full bg-[#8b8b8b]" />
        </Scrollbar>
      </div>

      {/* pointer from the editor field to the rendered text */}
      <svg viewBox="0 0 1850 966" className="pointer-events-none absolute top-0 left-0 z-20 h-[966px] w-[1850px] max-w-none" aria-hidden="true">
        <path d="M321 402L1054 189" stroke="#a04248" strokeWidth="4" strokeLinecap="round" />
        <path d="M1069 185L1048 182 1053 198Z" fill="#a04248" />
      </svg>
    </div>
  );
}
